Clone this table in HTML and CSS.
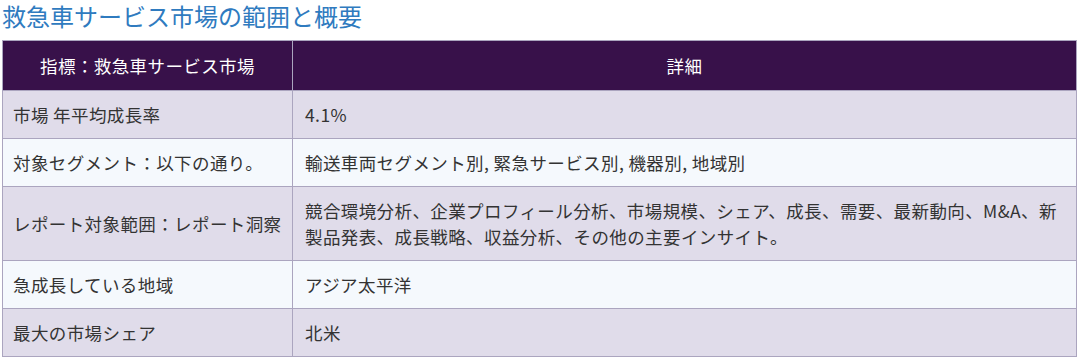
FILE: index.html
```html
<!DOCTYPE html>
<html lang="ja">
<head>
<meta charset="utf-8">
<link rel="stylesheet" href="styles.css">
</head>
<body>
<h2 class="title">救急車サービス市場の範囲と概要</h2>
<table class="scope">
  <colgroup><col class="col-a"><col></colgroup>
  <thead>
    <tr><th>指標：救急車サービス市場</th><th>詳細</th></tr>
  </thead>
  <tbody>
    <tr><td>市場 年平均成長率</td><td>4.1%</td></tr>
    <tr><td>対象セグメント：以下の通り。</td><td>輸送車両セグメント別, 緊急サービス別, 機器別, 地域別</td></tr>
    <tr><td>レポート対象範囲：レポート洞察</td><td>競合環境分析、企業プロフィール分析、市場規模、シェア、成長、需要、最新動向、M&amp;A、新製品発表、成長戦略、収益分析、その他の主要インサイト。</td></tr>
    <tr><td>急成長している地域</td><td>アジア太平洋</td></tr>
    <tr><td>最大の市場シェア</td><td>北米</td></tr>
  </tbody>
</table>
</body>
</html>
```
FILE: styles.css
```css
html, body {
  margin: 0;
  padding: 0;
  background: #ffffff;
}
body {
  padding: 0 3px 0 2px;
  font-family: "Noto Sans CJK JP", "Noto Sans", sans-serif;
  color: #333333;
}
.title {
  margin: 0;
  height: 40px;
  padding-top: 1px;
  box-sizing: border-box;
  font-size: 24px;
  line-height: 30px;
  font-weight: 400;
  color: #2f7bbf;
}
.scope {
  width: 100%;
  border-collapse: collapse;
  table-layout: fixed;
  font-size: 17.5px;
  line-height: 26px;
  letter-spacing: 0.4px;
}
.scope .col-a {
  width: 290px;
}
.scope th, .scope td {
  border: 1px solid #aba5bf;
  text-align: left;
  vertical-align: middle;
}
.scope th {
  background: #38114a;
  color: #ffffff;
  font-weight: 400;
  text-align: center;
  height: 49px;
  padding: 0 10px;
}
.scope td {
  padding: 10.5px 10px;
}
.scope tbody tr:nth-child(odd) td {
  background: #e0dcea;
}
.scope tbody tr:nth-child(even) td {
  background: #f5f9fd;
}
.scope td + td {
  padding-left: 12px;
}
```
